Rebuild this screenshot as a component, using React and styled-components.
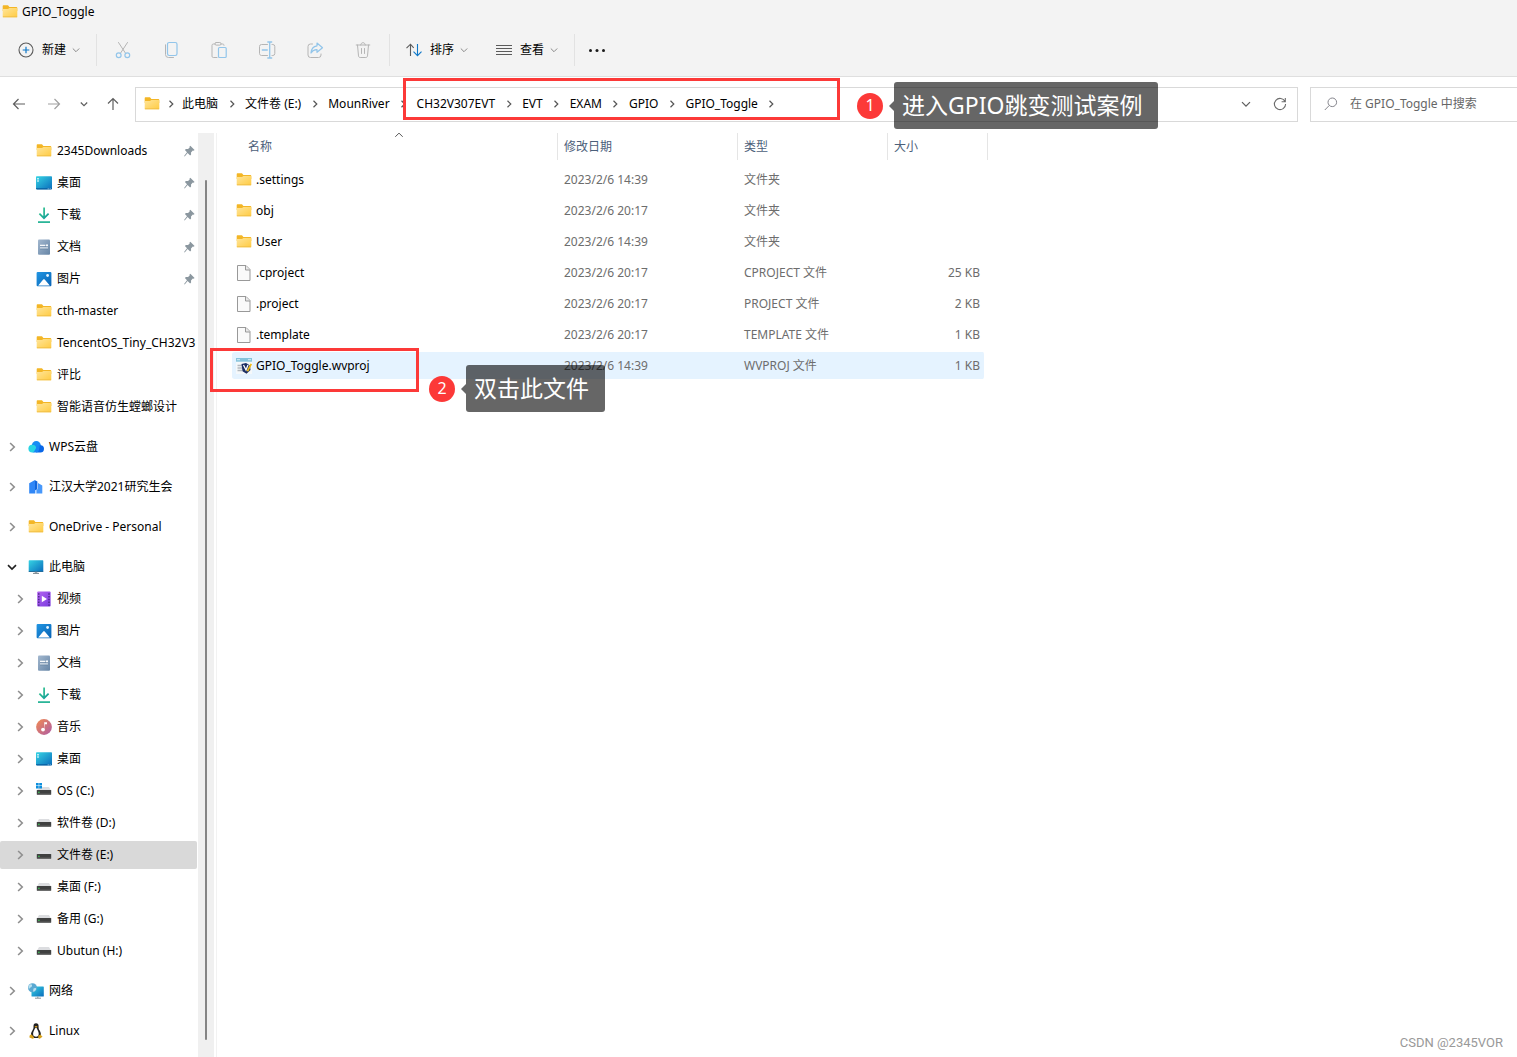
import React from "react";
import styled, { createGlobalStyle, css } from "styled-components";

const GlobalStyle = createGlobalStyle`
  *, *::before, *::after { box-sizing: border-box; }
  body {
    margin: 0;
    background: #fff;
    color: #000;
    font-family: "Noto Sans", "Noto Sans CJK SC", sans-serif;
    font-size: 12px;
    line-height: 16px;
  }
  button, input { font: inherit; color: inherit; }
  svg { display: block; flex: none; }
`;

const Page = styled.div`
  position: relative;
  display: flex;
  flex-direction: column;
  min-height: 100vh;
  overflow: hidden;
`;

const TitleBar = styled.header`
  display: flex;
  align-items: center;
  gap: 4px;
  height: 24px;
  padding-left: 2px;
  background: #f3f3f3;
`;

const Title = styled.h1`
  margin: 0;
  font-size: 12px;
  font-weight: 400;
`;

const Toolbar = styled.div`
  display: flex;
  align-items: center;
  height: 53px;
  padding-left: 4px;
  background: #f3f3f3;
  border-bottom: 1px solid #dfdfdf;
`;

const plainButton = css`
  display: flex;
  align-items: center;
  border: 0;
  background: none;
  padding: 0;
`;

const ToolButton = styled.button`
  ${plainButton}
  height: 36px;
  padding: 0 14px;
`;

const ToolLabel = styled.span`
  margin: 0 6px 0 8px;
`;

const IconButton = styled.button`
  ${plainButton}
  justify-content: center;
  flex: none;
  width: ${(p) => p.$width}px;
  height: 34px;
`;

const Separator = styled.span`
  width: 1px;
  height: 32px;
  margin: 0 2px;
  background: #e2e2e2;
`;

const NavBar = styled.div`
  display: flex;
  align-items: center;
  flex: none;
  height: 56px;
  padding: 0 0 2px 1px;
`;

const AddressBar = styled.nav`
  display: flex;
  align-items: center;
  flex: 1;
  min-width: 0;
  height: 35px;
  margin: 0 12px 0 6px;
  padding-left: 8px;
  border: 1px solid #d9d9d9;
`;

const Crumbs = styled.ol`
  display: flex;
  flex: 1;
  margin: 0;
  padding: 0;
  list-style: none;
`;

const Crumb = styled.li`
  display: flex;
  align-items: center;
  white-space: nowrap;
`;

const CrumbArrow = styled.span`
  display: flex;
  justify-content: center;
  width: ${(p) => p.$width || 27}px;
`;

const CrumbLink = styled.a`
  color: inherit;
  text-decoration: none;
`;

const SearchBox = styled.label`
  display: flex;
  align-items: center;
  gap: 12px;
  width: 207px;
  height: 35px;
  padding-left: 13px;
  border: 1px solid #d9d9d9;
  border-right: 0;
`;

const SearchInput = styled.input`
  flex: 1;
  min-width: 0;
  padding: 0;
  border: 0;
  outline: 0;
  background: none;
  &::placeholder { color: #666; opacity: 1; }
`;

const Body = styled.div`
  display: flex;
  flex: 1;
`;

const Sidebar = styled.nav`
  flex: none;
  width: 198px;
  padding: 2px 1px 0 0;
`;

const Group = styled.ul`
  margin: 0 0 8px;
  padding: 0;
  list-style: none;
`;

const TreeItem = styled.li`
  padding: 2px 0;
`;

const TreeLink = styled.a`
  display: flex;
  align-items: center;
  height: 28px;
  padding-left: ${(p) => (p.$nested ? 12 : 4)}px;
  border-radius: 2px;
  background: ${(p) => (p.$active ? "#d9d9d9" : "transparent")};
  color: inherit;
  text-decoration: none;
  white-space: nowrap;
`;

const TreeArrow = styled.span`
  display: flex;
  justify-content: center;
  flex: none;
  width: 16px;
  margin-right: 8px;
`;

const TreeLabel = styled.span`
  flex: 1;
  margin-left: 5px;
`;

const PinSlot = styled.span`
  margin-right: 2px;
`;

const ScrollTrack = styled.div`
  display: flex;
  flex: none;
  width: 16px;
  padding: 47px 7px 17px;
  background: #f0f0f0;
`;

const ScrollThumb = styled.div`
  flex: 1;
  background: #858585;
  border-radius: 1px;
`;

const Main = styled.main`
  flex: 1;
  min-width: 0;
  margin-left: 2px;
  padding-left: 15px;
  border-left: 1px solid #f2f2f2;
`;

const FileTable = styled.table`
  width: 756px;
  table-layout: fixed;
  border-collapse: separate;
  border-spacing: 0;
`;

const Column = styled.col`
  width: ${(p) => p.$width}px;
`;

const HeadCell = styled.th`
  padding: 0 0 4px;
  color: #4c607a;
  font-weight: 400;
  text-align: left;
`;

const HeadLabel = styled.div`
  position: relative;
  display: flex;
  align-items: center;
  height: 27px;
  padding-left: ${(p) => (p.$first ? 16 : 6)}px;
  border-left: ${(p) => (p.$first ? 0 : 1)}px solid #e5e5e5;
  border-right: ${(p) => (p.$last ? 1 : 0)}px solid #e5e5e5;
`;

const SortMark = styled.span`
  position: absolute;
  top: -2px;
  left: 163px;
`;

const Cell = styled.td`
  height: 31px;
  padding: 0 0 0 7px;
  border: 0 solid transparent;
  border-width: 2px 0;
  background-clip: padding-box;
  color: #6d6d6d;
  white-space: nowrap;
`;

const NameCell = styled(Cell)`
  padding-left: 4px;
  color: #000;
  border-radius: 4px 0 0 4px;
`;

const SizeCell = styled(Cell)`
  padding-right: 4px;
  border-right-width: 4px;
  border-radius: 0 5px 5px 0;
  text-align: right;
`;

const FileRow = styled.tr`
  & > td { background-color: ${(p) => (p.$active ? "#e5f3ff" : "transparent")}; }
`;

const FileName = styled.span`
  display: flex;
  align-items: center;
  gap: 4px;
`;

const Frame = styled.div`
  position: absolute;
  left: ${(p) => p.$x}px;
  top: ${(p) => p.$y}px;
  width: ${(p) => p.$w}px;
  height: ${(p) => p.$h}px;
  border: 3px solid #fc3938;
  pointer-events: none;
`;

const Note = styled.div`
  position: absolute;
  left: ${(p) => p.$x}px;
  top: ${(p) => p.$y}px;
  display: flex;
  align-items: center;
  pointer-events: none;
`;

const NoteNumber = styled.span`
  width: 26px;
  height: 26px;
  border-radius: 50%;
  background: #fc3938;
  color: #fff;
  font-size: 16px;
  line-height: 24px;
  text-align: center;
`;

const NoteArrow = styled.span`
  margin-left: 6px;
  border: 5px solid transparent;
  border-left: 0;
  border-right-color: rgba(0, 0, 0, 0.6);
`;

const NoteText = styled.span`
  height: 47px;
  padding: 0 16px 0 8px;
  border-radius: 3px;
  background: rgba(0, 0, 0, 0.6);
  color: #fff;
  font-size: 23px;
  line-height: 47px;
  white-space: nowrap;
`;

const Watermark = styled.footer`
  position: absolute;
  right: 14px;
  bottom: 6px;
  color: #999;
  font-family: Roboto, sans-serif;
  font-size: 13px;
`;

/* ---------- icons ---------- */

const Chevron = ({ d = "right", color = "#8a8a8a", size = 8, w = 1.2 }) => {
  const paths = {
    right: "M2.5 .8 5.8 4 2.5 7.2",
    down: "M.8 2.5 4 5.7 7.2 2.5",
    up: "M.3 5.8 4 2.1 7.7 5.8",
  };
  return (
    <svg width={size} height={size} viewBox="0 0 8 8" fill="none" stroke={color} strokeWidth={w}>
      <path d={paths[d]} />
    </svg>
  );
};

const Svg = ({ children, ...rest }) => (
  <svg width="16" height="16" viewBox="0 0 16 16" fill="none" {...rest}>
    {children}
  </svg>
);

const Line = ({ children, ...rest }) => (
  <Svg width="18" height="18" viewBox="0 0 18 18" strokeLinecap="round" strokeLinejoin="round" {...rest}>
    {children}
  </Svg>
);

const FolderIcon = () => (
  <Svg>
    <path d="M.7 2.2c0-.6.4-1 1-1h3.6c.4 0 .7.1.9.4L7.4 3h7c.5 0 .9.4.9.9V7H.7z" fill="#f3b626" />
    <path d="M.7 5h5.1c.4 0 .7-.1 1-.4l.6-.6h7.1c.5 0 .8.3.8.8v7.6c0 .5-.4.9-.9.9H1.6c-.5 0-.9-.4-.9-.9z" fill="url(#folderFill)" />
    <path d="M.9 12.800h14.200" stroke="#f0bd45" strokeWidth=".9" />
  </Svg>
);

const DesktopIcon = () => (
  <Svg>
    <rect x="0" y="1.3" width="16" height="13" rx=".8" fill="url(#screenFill)" />
    <path d="M0 13.200h16v.4a.8.8 0 0 1-.8.8H.8a.8.8 0 0 1-.8-.8z" fill="#075c9e" />
    <path d="M1.200 2.900h1.600v1.500H1.200zM1.200 5.300h1.600v1.500H1.200zM11.700 13.500h1v.7h-1zM13.700 13.500h1v.7h-1z" fill="#d9f7fb" />
  </Svg>
);

const DownloadIcon = () => (
  <Svg stroke="url(#greenFill)" strokeWidth="1.7">
    <path d="M8.1 .6v10.400M3.400 6.700 8 11.200l4.600-4.500" />
    <path d="M2 15.100h12" stroke="#20b293" />
  </Svg>
);

const DocumentIcon = () => (
  <Svg>
    <rect x="2" y=".4" width="12" height="15.4" rx="1" fill="url(#docFill)" />
    <path d="M4 5.800h5.400v1.500H4zM4 8.400h8v1.100H4zM10 5.400h2v2h-2z" fill="#fff" />
    <path d="M4 7.400h8M4 10h8" stroke="#557494" strokeWidth=".5" />
  </Svg>
);

const PictureIcon = () => (
  <Svg>
    <rect x=".6" y="1" width="14.8" height="14.2" rx="1" fill="url(#picFill)" />
    <path d="m2.200 14.400 5-5.800c.4-.5 1.100-.5 1.500 0l5.100 5.800z" fill="#fff" />
    <circle cx="11.6" cy="4.5" r="1.4" fill="#e6f5ff" />
  </Svg>
);

const CloudIcon = () => (
  <Svg>
    <circle cx="8.3" cy="6.7" r="4.6" fill="#168cf4" />
    <path d="M8 13.4c2-5.500 3-7.300 4.700-7.200A3.600 3.600 0 0 1 12 13.400z" fill="#0967e8" />
    <circle cx="4.300" cy="9.600" r="3.900" fill="#28d4e4" />
    <path d="M4 13.500c3.500 0 3.400-7.300 8-7.300-1 1.800 0 7.300-4 7.300z" fill="#1685f4" />
  </Svg>
);

const BuildingIcon = () => (
  <Svg>
    <path d="M1.200 4.300 7 1v13.500H1.200z" fill="#2f86f6" />
    <path d="M7 1.200 9.400 2.600V10L7 12z" fill="#1266dd" />
    <path d="M10 4 14.300 6.400V14.500H8.300V11L10 9.800z" fill="#4798fb" />
    <path d="M8.300 10.500v4H7v-3z" fill="#b7d8ff" />
  </Svg>
);

const ComputerIcon = () => (
  <Svg>
    <rect x=".7" y="1.200" width="14.600" height="11.500" rx=".7" fill="url(#screenFill)" />
    <path d="M.7 12h14.600v.8H.7z" fill="#17608d" />
    <path d="M6.700 12.800h2.600v1.400H6.700z" fill="#9aa5ad" />
    <path d="M5 14.400h6" stroke="#7d888f" strokeWidth="1" />
  </Svg>
);

const VideoIcon = () => (
  <Svg>
    <rect x="1.200" y=".5" width="13.400" height="15" rx="1" fill="url(#videoFill)" />
    <path d="M2.800 2.200v12.500M13 2.200v12.500" stroke="#47217e" strokeWidth="1.300" strokeDasharray="1.500 1.300" />
    <path d="M5.800 4.700 11 8l-5.200 3.300z" fill="#fff" />
  </Svg>
);

const MusicIcon = () => (
  <Svg>
    <circle cx="8" cy="8" r="7.900" fill="url(#musicFill)" />
    <path d="M8.100 3.200h2.900v2H9v5.600z" fill="#fff" />
    <circle cx="7" cy="10.600" r="1.900" fill="#fff" />
  </Svg>
);

const DriveIcon = ({ system }) => (
  <Svg>
    <path d="M3 4h10l2 3.500H1z" fill="#dcdde0" />
    <rect x=".8" y="7" width="14.400" height="4.700" rx=".5" fill="#3f4040" />
    <path d="M1.200 11h13.600" stroke="#6b6b6b" strokeWidth=".7" />
    <rect x="2.300" y="8.700" width="1.200" height="1.300" fill="#3fe05b" />
    {system && <path d="M0 0h2.700v2.500H0zM3.200 0H6v2.500H3.200zM0 3h2.700v2.600H0zM3.200 3H6v2.600H3.200z" fill="#0d8fdd" />}
  </Svg>
);

const NetworkIcon = () => (
  <Svg>
    <rect x="3.500" y="3.500" width="12.300" height="10" rx=".6" fill="url(#screenFill)" />
    <path d="M9.800 13.500v1.500M7 15.200h6" stroke="#89949b" strokeWidth="1" />
    <circle cx="4.500" cy="4.800" r="4.500" fill="#5aa9d2" />
    <path d="M1 2.500c2-2.500 3.500-1 3 .5S1.500 4.500 1.200 6C.3 5 .2 3.600 1 2.500zM5.500 5.500C7 4.500 8.400 5 8.200 6.200 7.500 8 6 8.700 5 8.500z" fill="#b9e0ef" />
  </Svg>
);

const LinuxIcon = () => (
  <Svg>
    <path d="M8 .3C6.300.3 5.400 1.500 5.500 3.200c.1 2.300-.3 2.800-1.400 4.700C3 9.600 2.700 11 3.200 13l3 2h4l2.600-2c.4-2-.2-3.900-1.100-5.400-.9-1.400-1.200-2.500-1.100-4.200C10.700 1.500 9.800.3 8 .3z" fill="#222" />
    <path d="M8 4.500c-1.300.8-1.400 2-2.200 3.500-.8 1.700-.9 3-.4 4.600.8 1.200 3.700 1.500 4.800.2.900-1.600.6-3.400-.2-4.900C9.200 6.400 9 5.200 8 4.500z" fill="#fff" />
    <path d="M6.500 3.500 8 2.900l1.600.7L8 4.800z" fill="#e9a616" />
    <path d="M3.300 11.200 5.900 14c.3.900-.2 1.700-1.300 1.700L1.400 14.500c.3-.8-.1-1.400.3-2zM10.300 12.500l2.600-1 .5 1.300 1.200.8c-.9.700-1.700 2.100-3.100 2.100-1.300 0-1.300-1.700-1.200-3.200z" fill="#d7a11c" />
  </Svg>
);

const PageIcon = () => (
  <Svg>
    <path d="M1.500.5h8.500l4 4v11H1.500z" fill="#fafafa" stroke="#999" />
    <path d="M9.500.7v4.300H14" stroke="#999" fill="#e9e9e9" />
  </Svg>
);

const ProjectIcon = () => (
  <Svg>
    <rect width="16" height="16" fill="#f5f8fa" />
    <path d="M0 0h16v3.700H0z" fill="#85c3dc" />
    <path d="M1 1.700h3M12 1.700h3" stroke="#e9f8ff" strokeWidth=".8" />
    <path d="M1.500 7.500H6M1.500 10H6M1.500 12.500H6" stroke="#b2b8be" strokeWidth="1.300" />
    <path d="m5.500 6 4.500-1 4 2.500.5 4.500-4 3.700-4-2.500z" fill="#1b2e63" />
    <path d="m7.500 7 2.500 5 2-5" stroke="#fff" strokeWidth="1.300" />
    <path d="m10.500 13 4-7.500 1.500.8-3.700 7.200z" fill="#f1bd17" />
  </Svg>
);

const PinIcon = () => (
  <svg width="11" height="12" viewBox="0 0 11 12">
    <path d="M6.300.7 10.600 5l-1 .7-.8-.2L7 7.400l.1 2.100-1 .9-2.500-2.500L.7 11.400l-.6-.5L3 7.300.9 5l1-1 2.200.1 1.700-1.800-.3-.8z" fill="#8b979f" />
  </svg>
);

const PlusIcon = () => (
  <Svg>
    <circle cx="8" cy="8" r="7" stroke="#5b5b5b" strokeWidth="1.100" />
    <path d="M8 4.700v6.600M4.700 8h6.600" stroke="#0f78c8" strokeWidth="1.200" />
  </Svg>
);

const CutIcon = () => (
  <Line>
    <path d="m4.500 1.500 7.200 11M13.500 1.500 6.300 12.500" stroke="#b5b5b5" />
    <circle cx="4.700" cy="14.200" r="2.400" stroke="#92c5ea" strokeWidth="1.200" />
    <circle cx="13.300" cy="14.200" r="2.400" stroke="#92c5ea" strokeWidth="1.200" />
  </Line>
);

const CopyIcon = () => (
  <Line>
    <path d="M3.500 3.800v9.700a3 3 0 0 0 3 3h5" stroke="#b5b5b5" />
    <rect x="5.500" y="1.500" width="9.500" height="13" rx="1.700" stroke="#92c5ea" strokeWidth="1.200" />
  </Line>
);

const PasteIcon = () => (
  <Line>
    <path d="M7 16.500H3.300c-.8 0-1.300-.5-1.300-1.300V4.300C2 3.500 2.500 3 3.300 3H5M11 3h1.700c.8 0 1.300.5 1.300 1.300" stroke="#b5b5b5" />
    <rect x="5" y="1.500" width="6" height="2.600" rx="1.200" stroke="#b5b5b5" />
    <rect x="8.500" y="6.500" width="7.700" height="10" rx="1" stroke="#92c5ea" strokeWidth="1.200" />
  </Line>
);

const RenameIcon = () => (
  <Line>
    <path d="M9.500 3.500h-6a2 2 0 0 0-2 2v7c0 1.100.9 2 2 2h6M14 3.500h.8a2 2 0 0 1 2 2v7a2 2 0 0 1-2 2H14" stroke="#b5b5b5" />
    <path d="M11.700 1.300v15.400M9.800 1h3.900M9.800 17h3.900M4.300 9h5" stroke="#92c5ea" strokeWidth="1.300" />
  </Line>
);

const ShareIcon = () => (
  <Line>
    <path d="M6.500 3h-2a2.500 2.500 0 0 0-2.500 2.500v8.500A2.500 2.500 0 0 0 4.500 16.500h8A2.500 2.500 0 0 0 15 14v-1" stroke="#b5b5b5" />
    <path d="m11 2 5.500 4.700L11 11.300V8.700C8.300 8.600 6.500 9.600 5 12c.3-4 2.500-6.800 6-7.200z" stroke="#92c5ea" strokeWidth="1.200" />
  </Line>
);

const TrashIcon = () => (
  <Line stroke="#b5b5b5">
    <path d="M2.200 4h13.600M6.700 4c0-3.200 4.600-3.200 4.600 0M3.500 4l1 10.900c.1 1 .7 1.600 1.700 1.600h5.600c1 0 1.600-.6 1.700-1.600l1-10.900M7.500 7.500v5M10.500 7.500v5" />
  </Line>
);

const SortIcon = () => (
  <Svg>
    <path d="M4.500 14V2.500M.5 6.200l4-4 3.200 3.600" stroke="#5b5b5b" strokeWidth="1.100" />
    <path d="M11.500 2v11.500M7.500 9.700l4 4 4-4" stroke="#0f78c8" strokeWidth="1.100" />
  </Svg>
);

const ViewIcon = () => (
  <Svg stroke="#5b5b5b">
    <path d="M0 3.500h16M0 6.500h16M0 9.500h16M0 12.500h16" />
  </Svg>
);

const DotsIcon = () => (
  <Svg fill="#1a1a1a">
    <circle cx="1.500" cy="8.500" r="1.500" />
    <circle cx="8" cy="8.500" r="1.500" />
    <circle cx="14.500" cy="8.500" r="1.500" />
  </Svg>
);

const ArrowIcon = ({ d, color }) => (
  <Svg stroke={color} strokeWidth="1.200">
    <path d={d} />
  </Svg>
);

const RefreshIcon = () => (
  <Svg stroke="#6b6b6b" strokeWidth="1.100">
    <path d="M13 5.500A5.600 5.600 0 1 0 13.600 8M13.300 2v3.700H9.600" />
  </Svg>
);

const SearchIcon = () => (
  <svg width="14" height="14" viewBox="0 0 14 14" fill="none" stroke="#85858c">
    <circle cx="8.300" cy="5.300" r="4.300" />
    <path d="M5.200 8.500.8 13" />
  </svg>
);

const Gradient = ({ id, from, to }) => (
  <linearGradient id={id} x1="0" y1="0" x2="1" y2="1">
    <stop offset="0" stopColor={from} />
    <stop offset="1" stopColor={to} />
  </linearGradient>
);

const DefsSvg = styled.svg`
  position: absolute;
`;

const GradientDefs = () => (
  <DefsSvg width="0" height="0" aria-hidden="true">
    <defs>
      <Gradient id="folderFill" from="#ffe59a" to="#ffcb42" />
      <Gradient id="screenFill" from="#36d4e4" to="#0a6cbc" />
      <Gradient id="greenFill" from="#35c88c" to="#119c9c" />
      <Gradient id="docFill" from="#a3b8cf" to="#6685a6" />
      <Gradient id="picFill" from="#2196e3" to="#0863b5" />
      <Gradient id="videoFill" from="#b365f0" to="#7a3bdf" />
      <Gradient id="musicFill" from="#f28b51" to="#ae5ca5" />
    </defs>
  </DefsSvg>
);

/* ---------- data ---------- */

const groups = [
  [
    { label: "2345Downloads", icon: FolderIcon, pin: true },
    { label: "桌面", icon: DesktopIcon, pin: true },
    { label: "下载", icon: DownloadIcon, pin: true },
    { label: "文档", icon: DocumentIcon, pin: true },
    { label: "图片", icon: PictureIcon, pin: true },
    { label: "cth-master", icon: FolderIcon },
    { label: "TencentOS_Tiny_CH32V3", icon: FolderIcon },
    { label: "评比", icon: FolderIcon },
    { label: "智能语音仿生螳螂设计", icon: FolderIcon },
  ].map((i) => ({ ...i, nested: true })),
  [{ label: "WPS云盘", icon: CloudIcon, arrow: "right" }],
  [{ label: "江汉大学2021研究生会", icon: BuildingIcon, arrow: "right" }],
  [{ label: "OneDrive - Personal", icon: FolderIcon, arrow: "right" }],
  [
    { label: "此电脑", icon: ComputerIcon, arrow: "down" },
    ...[
      { label: "视频", icon: VideoIcon },
      { label: "图片", icon: PictureIcon },
      { label: "文档", icon: DocumentIcon },
      { label: "下载", icon: DownloadIcon },
      { label: "音乐", icon: MusicIcon },
      { label: "桌面", icon: DesktopIcon },
      { label: "OS (C:)", icon: DriveIcon, system: true },
      { label: "软件卷 (D:)", icon: DriveIcon },
      { label: "文件卷 (E:)", icon: DriveIcon, active: true },
      { label: "桌面 (F:)", icon: DriveIcon },
      { label: "备用 (G:)", icon: DriveIcon },
      { label: "Ubutun (H:)", icon: DriveIcon },
    ].map((i) => ({ ...i, nested: true, arrow: "right" })),
  ],
  [{ label: "网络", icon: NetworkIcon, arrow: "right" }],
  [{ label: "Linux", icon: LinuxIcon, arrow: "right" }],
];

const files = [
  { name: ".settings", date: "2023/2/6 14:39", type: "文件夹", size: "", icon: FolderIcon },
  { name: "obj", date: "2023/2/6 20:17", type: "文件夹", size: "", icon: FolderIcon },
  { name: "User", date: "2023/2/6 14:39", type: "文件夹", size: "", icon: FolderIcon },
  { name: ".cproject", date: "2023/2/6 20:17", type: "CPROJECT 文件", size: "25 KB", icon: PageIcon },
  { name: ".project", date: "2023/2/6 20:17", type: "PROJECT 文件", size: "2 KB", icon: PageIcon },
  { name: ".template", date: "2023/2/6 20:17", type: "TEMPLATE 文件", size: "1 KB", icon: PageIcon },
  { name: "GPIO_Toggle.wvproj", date: "2023/2/6 14:39", type: "WVPROJ 文件", size: "1 KB", icon: ProjectIcon, active: true },
];

const crumbs = ["此电脑", "文件卷 (E:)", "MounRiver", "CH32V307EVT", "EVT", "EXAM", "GPIO", "GPIO_Toggle"];

const fileActions = [
  ["剪切", CutIcon],
  ["复制", CopyIcon],
  ["粘贴", PasteIcon],
  ["重命名", RenameIcon],
  ["共享", ShareIcon],
  ["删除", TrashIcon],
];

const MenuButton = ({ icon: Icon, label }) => (
  <ToolButton type="button">
    <Icon />
    <ToolLabel>{label}</ToolLabel>
    <Chevron d="down" w={1} />
  </ToolButton>
);

const TreeNode = ({ item }) => {
  const Icon = item.icon;
  return (
    <TreeItem>
      <TreeLink href="#" $nested={item.nested} $active={item.active}>
        <TreeArrow>
          {item.arrow && (
            <Chevron d={item.arrow} size={10} w={1.3} color={item.arrow === "down" ? "#222" : "#8f8f8f"} />
          )}
        </TreeArrow>
        <Icon system={item.system} />
        <TreeLabel>{item.label}</TreeLabel>
        {item.pin && (
          <PinSlot>
            <PinIcon />
          </PinSlot>
        )}
      </TreeLink>
    </TreeItem>
  );
};

const Callout = ({ x, y, number, children }) => (
  <Note $x={x} $y={y}>
    <NoteNumber>{number}</NoteNumber>
    <NoteArrow />
    <NoteText>{children}</NoteText>
  </Note>
);

export default function App() {
  return (
    <Page>
      <GlobalStyle />
      <GradientDefs />
      <TitleBar>
        <FolderIcon />
        <Title>GPIO_Toggle</Title>
      </TitleBar>
      <Toolbar>
        <MenuButton icon={PlusIcon} label="新建" />
        <Separator />
        {fileActions.map(([label, Icon]) => (
          <IconButton key={label} type="button" aria-label={label} $width={48}>
            <Icon />
          </IconButton>
        ))}
        <Separator />
        <MenuButton icon={SortIcon} label="排序" />
        <MenuButton icon={ViewIcon} label="查看" />
        <Separator />
        <IconButton type="button" aria-label="更多" $width={40}>
          <DotsIcon />
        </IconButton>
      </Toolbar>
      <NavBar>
        <IconButton type="button" aria-label="后退" $width={36}>
          <ArrowIcon color="#5f5f5f" d="M14 8H2.500M7.500 3l-5 5 5 5" />
        </IconButton>
        <IconButton type="button" aria-label="前进" $width={34}>
          <ArrowIcon color="#a0a0a0" d="M2 8h11.500M8.500 3l5 5-5 5" />
        </IconButton>
        <IconButton type="button" aria-label="最近" $width={26}>
          <Chevron d="down" color="#5f5f5f" />
        </IconButton>
        <IconButton type="button" aria-label="向上" $width={32}>
          <ArrowIcon color="#5f5f5f" d="M8 14V2.500M3 7.500l5-5 5 5" />
        </IconButton>
        <AddressBar aria-label="地址">
          <FolderIcon />
          <CrumbArrow $width={22}>
            <Chevron color="#555" />
          </CrumbArrow>
          <Crumbs>
            {crumbs.map((c) => (
              <Crumb key={c}>
                <CrumbLink href="#">{c}</CrumbLink>
                <CrumbArrow>
                  <Chevron color="#555" />
                </CrumbArrow>
              </Crumb>
            ))}
          </Crumbs>
          <IconButton type="button" aria-label="历史" $width={34}>
            <Chevron d="down" color="#5f5f5f" size={10} w={1} />
          </IconButton>
          <IconButton type="button" aria-label="刷新" $width={34}>
            <RefreshIcon />
          </IconButton>
        </AddressBar>
        <SearchBox>
          <SearchIcon />
          <SearchInput type="text" aria-label="搜索" placeholder="在 GPIO_Toggle 中搜索" />
        </SearchBox>
      </NavBar>
      <Body>
        <Sidebar>
          {groups.map((items, i) => (
            <Group key={i}>
              {items.map((item) => (
                <TreeNode key={item.label} item={item} />
              ))}
            </Group>
          ))}
        </Sidebar>
        <ScrollTrack>
          <ScrollThumb />
        </ScrollTrack>
        <Main>
          <FileTable>
            <colgroup>
              <Column $width={325} />
              <Column $width={180} />
              <Column $width={150} />
              <Column $width={101} />
            </colgroup>
            <thead>
              <tr>
                <HeadCell>
                  <HeadLabel $first>
                    名称
                    <SortMark>
                      <Chevron d="up" color="#555" w={1} />
                    </SortMark>
                  </HeadLabel>
                </HeadCell>
                <HeadCell>
                  <HeadLabel>修改日期</HeadLabel>
                </HeadCell>
                <HeadCell>
                  <HeadLabel>类型</HeadLabel>
                </HeadCell>
                <HeadCell>
                  <HeadLabel $last>大小</HeadLabel>
                </HeadCell>
              </tr>
            </thead>
            <tbody>
              {files.map(({ icon: Icon, ...f }) => (
                <FileRow key={f.name} $active={f.active}>
                  <NameCell>
                    <FileName>
                      <Icon />
                      {f.name}
                    </FileName>
                  </NameCell>
                  <Cell>{f.date}</Cell>
                  <Cell>{f.type}</Cell>
                  <SizeCell>{f.size}</SizeCell>
                </FileRow>
              ))}
            </tbody>
          </FileTable>
        </Main>
      </Body>
      <Frame $x={403} $y={78} $w={437} $h={42} />
      <Frame $x={210} $y={348} $w={209} $h={44} />
      <Callout x={857} y={82} number={1}>
        进入GPIO跳变测试案例
      </Callout>
      <Callout x={429} y={365} number={2}>
        双击此文件
      </Callout>
      <Watermark>CSDN @2345VOR</Watermark>
    </Page>
  );
}
